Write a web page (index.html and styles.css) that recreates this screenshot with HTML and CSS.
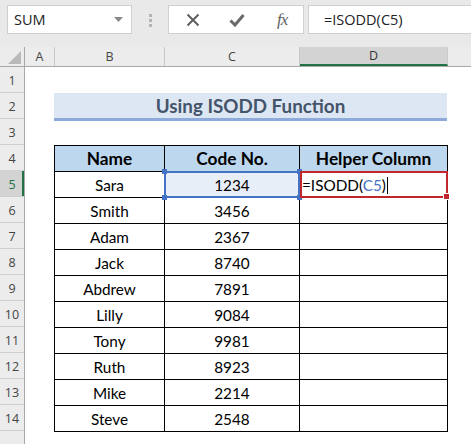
FILE: index.html
```html
<!DOCTYPE html>
<html lang="en">
<head>
  <meta charset="UTF-8">
  <title>Using ISODD Function</title>
  <link rel="stylesheet" href="styles.css">
</head>
<body>
  <div class="toolbar">
    <div class="namebox">
      <span>SUM</span>
      <svg class="drop" width="9" height="5" viewBox="0 0 9 5"><path d="M0 0 H9 L4.5 5 Z" fill="#8a8a8a"/></svg>
    </div>
    <div class="grip"><i></i><i></i><i></i></div>
    <div class="fxbox">
      <svg width="14" height="14" viewBox="0 0 14 14"><path d="M1.5 1.5 L12.5 12.5 M12.5 1.5 L1.5 12.5" stroke="#5f5f5f" stroke-width="2"/></svg>
      <svg width="16" height="14" viewBox="0 0 16 14"><path d="M1.5 7.5 L6 12 L14.5 2" stroke="#6a6a6a" stroke-width="3" fill="none"/></svg>
      <span class="fx">fx</span>
    </div>
    <div class="formula">=ISODD(C5)</div>
  </div>

  <div class="colheads">
    <div class="corner"><svg width="13" height="13" viewBox="0 0 13 13"><path d="M13 0 V13 H0 Z" fill="#b9b9b9"/></svg></div>
    <div class="colhead col-a">A</div>
    <div class="colhead col-b">B</div>
    <div class="colhead col-c">C</div>
    <div class="colhead col-d selected">D</div>
    <div class="colhead col-rest"></div>
  </div>

  <div class="body">
    <div class="rowheads">
      <div class="rowhead">1</div>
      <div class="rowhead">2</div>
      <div class="rowhead">3</div>
      <div class="rowhead">4</div>
      <div class="rowhead selected">5</div>
      <div class="rowhead">6</div>
      <div class="rowhead">7</div>
      <div class="rowhead">8</div>
      <div class="rowhead">9</div>
      <div class="rowhead">10</div>
      <div class="rowhead">11</div>
      <div class="rowhead">12</div>
      <div class="rowhead">13</div>
      <div class="rowhead">14</div>
      <div class="rowhead"></div>
    </div>

    <div class="cells">
      <div class="title">Using ISODD Function</div>

      <table class="data">
        <colgroup><col class="w-b"><col class="w-c"><col class="w-d"></colgroup>
        <thead>
          <tr><th>Name</th><th>Code No.</th><th>Helper Column</th></tr>
        </thead>
        <tbody>
          <tr>
            <td>Sara</td>
            <td class="ref">1234<div class="ref-box"><i class="h tl"></i><i class="h bl"></i><i class="h tr"></i><i class="h br"></i></div></td>
            <td class="active">=ISODD(<span class="ref-text">C5</span>)<span class="caret"></span><div class="active-box"><i class="fill"></i></div></td>
          </tr>
          <tr><td>Smith</td><td>3456</td><td></td></tr>
          <tr><td>Adam</td><td>2367</td><td></td></tr>
          <tr><td>Jack</td><td>8740</td><td></td></tr>
          <tr><td>Abdrew</td><td>7891</td><td></td></tr>
          <tr><td>Lilly</td><td>9084</td><td></td></tr>
          <tr><td>Tony</td><td>9981</td><td></td></tr>
          <tr><td>Ruth</td><td>8923</td><td></td></tr>
          <tr><td>Mike</td><td>2214</td><td></td></tr>
          <tr><td>Steve</td><td>2548</td><td></td></tr>
        </tbody>
      </table>
    </div>
  </div>
</body>
</html>
```

FILE: styles.css
```css
/* Page */
body {
  margin: 0;
  width: 471px;
  height: 444px;
  overflow: hidden;
  background: #ffffff;
  font-family: 'Lato', 'Open Sans', sans-serif;
  color: #000;
}

/* Formula bar */
.toolbar {
  display: flex;
  align-items: flex-start;
  height: 47px;
  padding: 5px 0 0 7px;
  box-sizing: border-box;
  background: #e9e9e9;
}

.namebox {
  display: flex;
  align-items: center;
  justify-content: space-between;
  width: 125px;
  height: 29px;
  box-sizing: border-box;
  padding: 0 8px 0 6px;
  background: #fff;
  border: 1px solid #cfcfcf;
  font-family: 'Open Sans', sans-serif;
  font-size: 14.5px;
  color: #222;
}

.grip {
  display: flex;
  flex-direction: column;
  gap: 2px;
  margin: 9px 0 0 17px;
  width: 3px;
}

.grip i {
  display: block;
  width: 3px;
  height: 3px;
  background: #b3b3b3;
}

.fxbox {
  display: flex;
  align-items: center;
  width: 136px;
  height: 29px;
  margin-left: 16px;
  box-sizing: border-box;
  padding-left: 17px;
  background: #fff;
  border: 1px solid #cfcfcf;
}

.fxbox svg:nth-child(2) {
  margin-left: 29px;
}

.fx {
  margin-left: 32px;
  font-family: 'Liberation Serif', serif;
  font-style: italic;
  font-size: 17px;
  color: #5f5f5f;
  letter-spacing: -1px;
}

.formula {
  flex: 1;
  height: 29px;
  margin-left: 4px;
  box-sizing: border-box;
  padding: 4px 0 0 15px;
  background: #fff;
  border: 1px solid #cfcfcf;
  border-right: none;
  font-family: 'Open Sans', sans-serif;
  font-size: 14.5px;
  color: #222;
}

/* Column headers */
.colheads {
  display: flex;
  height: 19px;
  background: #ececec;
  border-bottom: 1px solid #a9a9a9;
}

.corner {
  width: 25px;
  box-sizing: border-box;
  border-right: 1px solid #a9a9a9;
  display: flex;
  align-items: flex-end;
  justify-content: flex-end;
  padding: 0 3px 2px 0;
}

.colhead {
  box-sizing: border-box;
  border-right: 1px solid #c9c9c9;
  font-family: 'Open Sans', sans-serif;
  font-size: 12.5px;
  color: #444;
  text-align: center;
  line-height: 19px;
}

.col-a { width: 30px; }
.col-b { width: 110px; }
.col-c { width: 135px; }
.col-d { width: 148px; }
.col-rest { flex: 1; border-right: none; }

.colhead.selected {
  background: #d3d3d3;
  border-bottom: 2px solid #217346;
  color: #333;
  line-height: 18px;
}

/* Body */
.body {
  display: flex;
}

.rowheads {
  width: 25px;
  flex-shrink: 0;
  background: #ececec;
  border-right: 1px solid #a9a9a9;
  box-sizing: border-box;
}

.rowhead {
  height: 26px;
  box-sizing: border-box;
  border-bottom: 1px solid #d0d0d0;
  font-family: 'Open Sans', sans-serif;
  font-size: 12.5px;
  color: #444;
  text-align: center;
  line-height: 27px;
}

.rowhead.selected {
  background: #d3d3d3;
  box-shadow: inset -2px 0 0 #217346;
  color: #217346;
}

.cells {
  display: grid;
  grid-template-columns: 29px 110px 135px 148px 1fr;
  grid-template-rows: repeat(15, 26px);
}

/* Title band */
.title {
  grid-column: 2 / 5;
  grid-row: 2;
  height: 25px;
  background: #dde7f3;
  border-bottom: 3px solid #8eaadb;
  font-size: 18.8px;
  font-weight: bold;
  color: #44546a;
  text-align: center;
  line-height: 25px;
}

/* Data table */
.data {
  grid-column: 2 / 5;
  grid-row: 4 / 15;
  border-collapse: collapse;
  table-layout: fixed;
  width: 394px;
  font-size: 15.3px;
}

.w-b { width: 110px; }
.w-c { width: 135px; }
.w-d { width: 148px; }

.data th, .data td {
  height: 26px;
  padding: 0;
  border: 1px solid #000;
  text-align: center;
  box-sizing: border-box;
}

.data th {
  background: #bdd7ee;
  font-size: 17.3px;
  font-weight: bold;
}

.data td.ref {
  position: relative;
  background: #e8eef7;
}

.ref-box {
  position: absolute;
  inset: -1px;
  border: 2px solid #4472c4;
}

.h {
  position: absolute;
  width: 5px;
  height: 5px;
  background: #4472c4;
}

.h.tl { left: -4px; top: -4px; }
.h.bl { left: -4px; bottom: -4px; }
.h.tr { right: -4px; top: -4px; }
.h.br { right: -4px; bottom: -4px; }

.data td.active {
  position: relative;
  text-align: left;
  padding-left: 2px;
}

.ref-text {
  color: #4472c4;
}

.caret {
  display: inline-block;
  width: 1px;
  height: 17px;
  margin-left: 1px;
  background: #000;
  vertical-align: -3px;
}

.active-box {
  position: absolute;
  inset: -1px -1px -1px 0;
  border: 2.5px solid #c0282e;
}

.fill {
  position: absolute;
  right: -4px;
  bottom: -4px;
  width: 5px;
  height: 5px;
  background: #c0282e;
  border: 1px solid #fff;
}
```
